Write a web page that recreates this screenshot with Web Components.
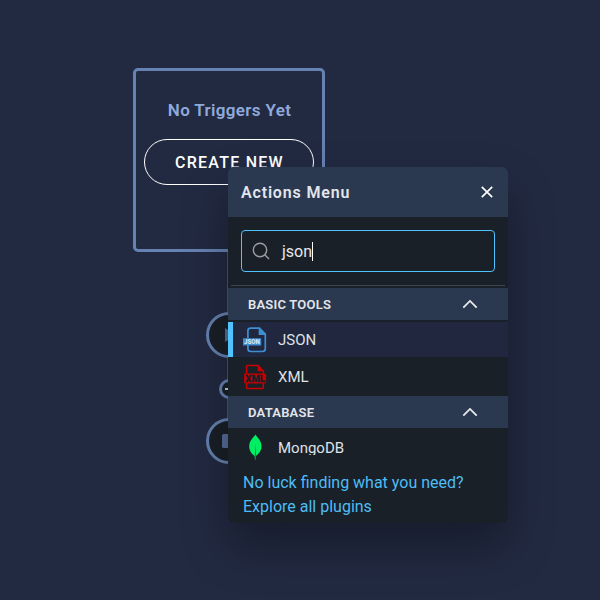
<!DOCTYPE html>
<html lang="en">
<head>
<meta charset="utf-8">
<title>Actions Menu</title>
<style>
html,body{margin:0;width:600px;height:600px;overflow:hidden;background:#222a42;font-family:Roboto,"Liberation Sans",sans-serif}
</style>
</head>
<body>
<flow-canvas>
  <trigger-card slot="card" heading="No Triggers Yet" action="CREATE NEW"></trigger-card>
  <actions-menu slot="menu" heading="Actions Menu" query="json">
    <menu-section heading="BASIC TOOLS">
      <plugin-item label="JSON" class="active" active>
        <svg slot="icon" width="24" height="26" viewBox="0 0 24 26"><path d="M4.900 11V3.800Q4.900 1.200 7.600 1.200H16.500L22.300 7V21.500Q22.300 24.500 19.300 24.500H7.900Q4.900 24.500 4.900 21.500V18" fill="none" stroke="#3d8fd1" stroke-width="1.700"/><path d="M15.700 1V8H23Z" fill="#3d8fd1"/><rect x="0" y="11.200" width="18.200" height="7.400" rx=".5" fill="#3d8fd1"/><text x="9" y="17.300" text-anchor="middle" textLength="15.800" lengthAdjust="spacingAndGlyphs" font-family="Roboto,sans-serif" font-size="6.300" font-weight="900" fill="#d5e5f4">JSON</text></svg>
      </plugin-item>
      <plugin-item label="XML">
        <svg slot="icon" width="24" height="26" viewBox="0 0 24 26"><g transform="translate(-.5 0)"><path d="M4 10V2.500Q4 1.400 5.200 1.400H15.500L20.800 7V10M4 18.500V23.500Q4 24.600 5.200 24.600H19.600Q20.800 24.600 20.800 23.500V18.500" fill="none" stroke="#c80000" stroke-width="1.500"/><path d="M15 1V7.300H21.300Z" fill="#c80000"/><rect x="1.600" y="9.400" width="22" height="10" rx="1.400" fill="#c80000"/><text x="12.600" y="17.700" text-anchor="middle" textLength="19.500" lengthAdjust="spacingAndGlyphs" font-family="Roboto,sans-serif" font-size="9.200" font-weight="900" fill="#1a1f28" stroke="#1a1f28" stroke-width=".3">XML</text></g></svg>
      </plugin-item>
    </menu-section>
    <menu-section heading="DATABASE">
      <plugin-item label="MongoDB" class="last">
        <svg slot="icon" width="24" height="26" viewBox="0 0 24 26"><path d="M12.400.500C13.200 2.700 18.500 5.500 18.500 12.300C18.500 17.700 15 20.300 12.900 21.900L12.700 25.400H12L11.600 22C9.300 20.200 6.200 17.500 6.200 12.300C6.200 6 11.400 2.800 12.400.500Z" fill="#00ed64"/><path d="M12.400 9L12.900 21.900L12.700 25.400H12L11.800 22Z" fill="#087b49"/></svg>
      </plugin-item>
    </menu-section>
    <span slot="help">No luck finding what you need?<br>Explore all plugins</span>
  </actions-menu>
</flow-canvas>
<script>
const attach = (el, css, html) => {
  const t = document.createElement('template');
  t.innerHTML = `<style>*{box-sizing:border-box}${css}</style>${html}`;
  el.attachShadow({mode: 'open'}).append(t.content.cloneNode(true));
};

customElements.define('trigger-card', class extends HTMLElement {
  constructor() {
    super();
    attach(this, `
      :host{display:flex;flex-direction:column;align-items:center;box-sizing:border-box;width:192px;height:184px;border:3px solid #6682b2;border-radius:5px;padding-top:28px}
      h2{margin:0;font-size:17px;line-height:22px;font-weight:600;letter-spacing:.35px;padding-left:1px;color:#8fa9da;white-space:nowrap}
      button{margin:18px 0 0;padding:1px 0 0 1px;width:170px;height:46px;border:1px solid #fff;border-radius:23px;background:none;color:#fff;font:500 16px/43px Roboto,sans-serif;letter-spacing:1.25px}
    `, `<h2>${this.getAttribute('heading')}</h2><button>${this.getAttribute('action')}</button>`);
  }
});

customElements.define('flow-node', class extends HTMLElement {
  constructor() {
    super();
    attach(this, `
      :host{display:grid;place-items:center;box-sizing:border-box;border:3px solid #6682b2;border-radius:50%;background:#1a2028}
      svg{display:block}
    `, `<slot></slot>`);
  }
});

customElements.define('flow-canvas', class extends HTMLElement {
  constructor() {
    super();
    attach(this, `
      :host{display:block;position:relative;width:600px;height:600px;overflow:hidden}
      slot[name=card]::slotted(*){position:absolute;left:133px;top:68px}
      slot[name=menu]::slotted(*){position:absolute;left:228px;top:167px}
      .line{position:absolute;left:227px;top:252px;width:2px;height:180px;background:#465576}
      flow-node{position:absolute}
      .play{left:206px;top:312px;width:46px;height:46px}
      .plus{left:219px;top:379px;width:20px;height:20px}
      .stop{left:206px;top:418px;width:46px;height:46px}
    `, `
      <slot name="card"></slot>
      <div class="line"></div>
      <flow-node class="play"><svg width="14" height="16" viewBox="0 0 14 16"><path d="M3 1L14 8L3 15Z" fill="#566c99"/></svg></flow-node>
      <flow-node class="plus"><svg width="8" height="8" viewBox="0 0 8 8"><path d="M0 4H8M4 0V8" stroke="#bcd4f5" stroke-width="2"/></svg></flow-node>
      <flow-node class="stop"><svg width="14" height="14"><rect width="14" height="14" rx="1.500" fill="#566c99"/></svg></flow-node>
      <slot name="menu"></slot>`);
  }
});

customElements.define('actions-menu', class extends HTMLElement {
  constructor() {
    super();
    attach(this, `
      :host{display:flex;flex-direction:column;box-sizing:border-box;width:280px;height:356px;border-radius:6px;background:#1a2028;overflow:hidden;
        box-shadow:0 24px 48px rgba(0,0,0,.33)}
      header{display:flex;align-items:center;justify-content:space-between;height:50px;padding:0 14px 0 13px;background:#2b3950;flex:none}
      h1{margin:2px 0 0;font-size:16px;line-height:20px;font-weight:600;letter-spacing:.83px;color:#e3e6ec}
      .search{display:flex;align-items:center;height:42px;margin:13px 13px 13px;border:1px solid #4fc3ff;border-radius:4px;padding-left:10px;color:#e6e8eb;font-size:16px;flex:none}
      .search svg{margin-right:12px}
      .caret{width:1px;height:19px;background:#fff}
      .rule{height:1px;margin:0 3px 2px;background:#40464f;flex:none}
      footer{margin-top:16px;padding-left:15px;color:#4dbdf5;font-size:16px;line-height:24px;white-space:nowrap}
    `, `
      <header><h1>${this.getAttribute('heading')}</h1>
        <svg width="14" height="14" viewBox="0 0 14 14"><path d="M1.800 1.800L12.200 12.200M12.200 1.800L1.800 12.200" stroke="#fff" stroke-width="1.700"/></svg></header>
      <div class="search">
        <svg width="18" height="18" viewBox="0 0 18 18"><g fill="none" stroke="#999da3" stroke-width="1.400"><circle cx="8" cy="8" r="6.700"/><path d="M12.800 12.800L17 17"/></g></svg>
        <span>${this.getAttribute('query')}</span><i class="caret"></i></div>
      <div class="rule"></div>
      <slot></slot>
      <footer><slot name="help"></slot></footer>`);
  }
});

customElements.define('menu-section', class extends HTMLElement {
  constructor() {
    super();
    attach(this, `
      :host{display:block;flex:none}
      .bar{display:flex;align-items:center;justify-content:space-between;height:32px;padding:0 30px 0 20px;background:#2b3950;color:#e3e6ec;font-size:13px;font-weight:600;line-height:20px;letter-spacing:.22px}
      .bar span{margin-top:2px}
    `, `
      <div class="bar"><span>${this.getAttribute('heading')}</span>
        <svg width="16" height="10" viewBox="0 0 16 10"><path d="M1.300 8.600L8 1.900L14.700 8.600" fill="none" stroke="#e8ebef" stroke-width="1.800"/></svg></div>
      <slot></slot>`);
  }
});

customElements.define('plugin-item', class extends HTMLElement {
  constructor() {
    super();
    attach(this, `
      :host{display:flex;align-items:center;box-sizing:border-box;height:39px;padding-left:15px;color:#dfe2e6;font-size:15px;line-height:20px}
      :host([active]){height:35px;margin-top:2px;padding-left:10px;border-left:5px solid #4fc3ff;background:#20273f}
      :host(.last){height:27px;align-items:flex-start}
      :host(.last) .icon{margin-top:6px}
      :host(.last) .name{margin-top:10px;height:17px;overflow:hidden}
      .icon{display:block;width:24px;height:26px;margin-right:11px}
      ::slotted(svg){display:block}
    `, `<span class="icon"><slot name="icon"></slot></span><span class="name">${this.getAttribute('label')}</span>`);
  }
});
</script>
</body>
</html>
